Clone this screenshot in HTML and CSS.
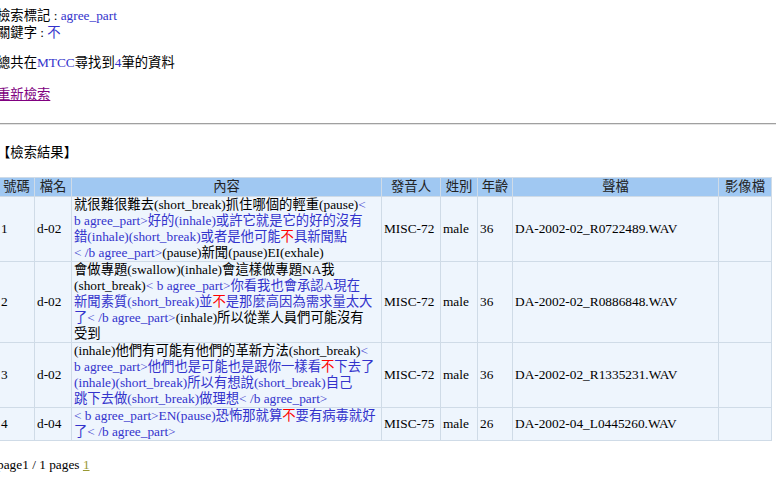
FILE: index.html
```html
<!DOCTYPE html>
<html>
<head>
  <meta charset="utf-8">
  <title>檢索結果</title>
  <link rel="stylesheet" href="styles.css">
</head>
<body>
  <div class="page">
    <div class="query">
      <div>檢索標記 : <span class="hl">agree_part</span></div>
      <div>關鍵字 : <span class="hl">不</span></div>
    </div>
    <p class="summary">總共在<span class="hl">MTCC</span>尋找到<span class="hl">4</span>筆的資料</p>
    <a href="#" class="again">重新檢索</a>
    <hr>
    <p class="caption">【檢索結果】</p>

    <table class="results">
      <colgroup>
        <col style="width:35px">
        <col style="width:36px">
        <col style="width:309px">
        <col style="width:58px">
        <col style="width:36px">
        <col style="width:34px">
        <col style="width:205px">
        <col style="width:52px">
      </colgroup>
      <tr>
        <th>號碼</th><th>檔名</th><th>內容</th><th>發音人</th><th>姓別</th><th>年齡</th><th>聲檔</th><th>影像檔</th>
      </tr>
      <tr>
        <td>1</td>
        <td>d-02</td>
        <td class="text">就很難很難去(short_break)抓住哪個的輕重(pause)<span class="tag">&lt;<br>b agree_part&gt;好的(inhale)或許它就是它的好的沒有<br>錯(inhale)(short_break)或者是他可能<span class="kw">不</span>具新聞點<br>&lt; /b agree_part&gt;</span>(pause)新聞(pause)EI(exhale)</td>
        <td>MISC-72</td>
        <td>male</td>
        <td>36</td>
        <td>DA-2002-02_R0722489.WAV</td>
        <td></td>
      </tr>
      <tr>
        <td>2</td>
        <td>d-02</td>
        <td class="text">會做專題(swallow)(inhale)會這樣做專題NA我<br>(short_break)<span class="tag">&lt; b agree_part&gt;你看我也會承認A現在<br>新聞素質(short_break)並<span class="kw">不</span>是那麼高因為需求量太大<br>了&lt; /b agree_part&gt;</span>(inhale)所以從業人員們可能沒有<br>受到</td>
        <td>MISC-72</td>
        <td>male</td>
        <td>36</td>
        <td>DA-2002-02_R0886848.WAV</td>
        <td></td>
      </tr>
      <tr>
        <td>3</td>
        <td>d-02</td>
        <td class="text">(inhale)他們有可能有他們的革新方法(short_break)<span class="tag">&lt;<br>b agree_part&gt;他們也是可能也是跟你一樣看<span class="kw">不</span>下去了<br>(inhale)(short_break)所以有想說(short_break)自己<br>跳下去做(short_break)做理想&lt; /b agree_part&gt;</span></td>
        <td>MISC-72</td>
        <td>male</td>
        <td>36</td>
        <td>DA-2002-02_R1335231.WAV</td>
        <td></td>
      </tr>
      <tr>
        <td>4</td>
        <td>d-04</td>
        <td class="text"><span class="tag">&lt; b agree_part&gt;EN(pause)恐怖那就算<span class="kw">不</span>要有病毒就好<br>了&lt; /b agree_part&gt;</span></td>
        <td>MISC-75</td>
        <td>male</td>
        <td>26</td>
        <td>DA-2002-04_L0445260.WAV</td>
        <td></td>
      </tr>
    </table>

    <p class="pager">page1 / 1 pages <a href="#" class="pagelink">1</a></p>
  </div>
</body>
</html>
```

FILE: styles.css
```css
/* 頁面 */
body {
  margin: 0;
  padding: 0;
  background: #fff;
  color: #000;
  font-family: "Liberation Serif", "Noto Sans CJK TC", serif;
  font-size: 13.33px;
  line-height: 16px;
}
.page {
  margin: 7px 0 0 -3px;
}
.query {
  line-height: 17px;
}
.hl {
  color: #3333cc;
}
.summary {
  margin: 14px 0 16px 0;
}
.again {
  color: #800080;
}
hr {
  margin: 20px 0;
  border: 0;
  border-top: 1px solid #a0a0a0;
  border-bottom: 1px solid #e4e4e4;
}
.caption {
  margin: 0 0 16px 0;
}

/* 結果表格 */
.results {
  margin-left: 1px;
  width: 774px;
  table-layout: fixed;
  border-collapse: separate;
  border-spacing: 1px;
  background: #cfdbe7;
}
.results th {
  padding: 1px 2px;
  background: #a0c8f2;
  color: #222;
  font-weight: normal;
  text-align: center;
}
.results td {
  padding: 0 2px;
  background: #eef5fd;
  vertical-align: middle;
  white-space: nowrap;
  overflow: hidden;
}
.results td.text {
  white-space: normal;
}
.tag {
  color: #3333cc;
}
.kw {
  color: #ff0000;
}

.pager {
  margin: 16px 0 0 0;
}
.pagelink {
  color: #999933;
}
```
